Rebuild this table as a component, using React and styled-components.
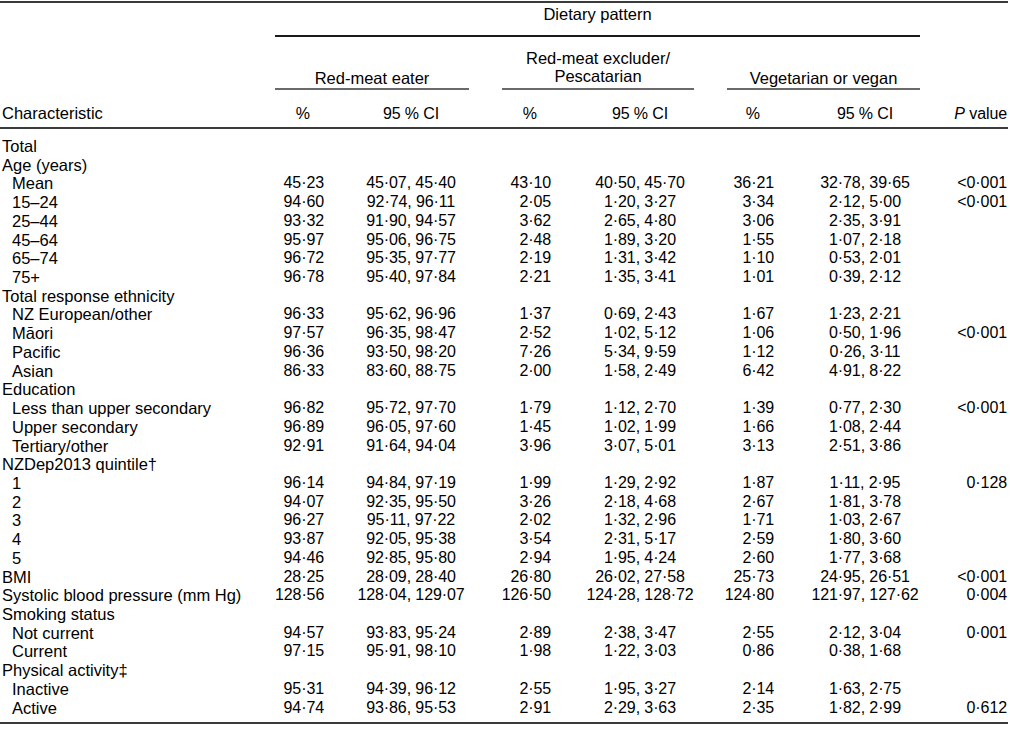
import React from 'react';
import styled, { createGlobalStyle } from 'styled-components';

const GlobalStyle = createGlobalStyle`
  body {
    margin: 0;
    background: #fff;
    font-family: "Liberation Sans", Arial, sans-serif;
    color: #000;
  }
`;

const rows = [
  { label: 'Total' },
  { label: 'Age (years)' },
  { label: 'Mean', sub: true, v: ['45·23', '45·07, 45·40', '43·10', '40·50, 45·70', '36·21', '32·78, 39·65', '<0·001'] },
  { label: '15–24', sub: true, v: ['94·60', '92·74, 96·11', '2·05', '1·20, 3·27', '3·34', '2·12, 5·00', '<0·001'] },
  { label: '25–44', sub: true, v: ['93·32', '91·90, 94·57', '3·62', '2·65, 4·80', '3·06', '2·35, 3·91', ''] },
  { label: '45–64', sub: true, v: ['95·97', '95·06, 96·75', '2·48', '1·89, 3·20', '1·55', '1·07, 2·18', ''] },
  { label: '65–74', sub: true, v: ['96·72', '95·35, 97·77', '2·19', '1·31, 3·42', '1·10', '0·53, 2·01', ''] },
  { label: '75+', sub: true, v: ['96·78', '95·40, 97·84', '2·21', '1·35, 3·41', '1·01', '0·39, 2·12', ''] },
  { label: 'Total response ethnicity' },
  { label: 'NZ European/other', sub: true, v: ['96·33', '95·62, 96·96', '1·37', '0·69, 2·43', '1·67', '1·23, 2·21', ''] },
  { label: 'Māori', sub: true, v: ['97·57', '96·35, 98·47', '2·52', '1·02, 5·12', '1·06', '0·50, 1·96', '<0·001'] },
  { label: 'Pacific', sub: true, v: ['96·36', '93·50, 98·20', '7·26', '5·34, 9·59', '1·12', '0·26, 3·11', ''] },
  { label: 'Asian', sub: true, v: ['86·33', '83·60, 88·75', '2·00', '1·58, 2·49', '6·42', '4·91, 8·22', ''] },
  { label: 'Education' },
  { label: 'Less than upper secondary', sub: true, v: ['96·82', '95·72, 97·70', '1·79', '1·12, 2·70', '1·39', '0·77, 2·30', '<0·001'] },
  { label: 'Upper secondary', sub: true, v: ['96·89', '96·05, 97·60', '1·45', '1·02, 1·99', '1·66', '1·08, 2·44', ''] },
  { label: 'Tertiary/other', sub: true, v: ['92·91', '91·64, 94·04', '3·96', '3·07, 5·01', '3·13', '2·51, 3·86', ''] },
  { label: 'NZDep2013 quintile†' },
  { label: '1', sub: true, v: ['96·14', '94·84, 97·19', '1·99', '1·29, 2·92', '1·87', '1·11, 2·95', '0·128'] },
  { label: '2', sub: true, v: ['94·07', '92·35, 95·50', '3·26', '2·18, 4·68', '2·67', '1·81, 3·78', ''] },
  { label: '3', sub: true, v: ['96·27', '95·11, 97·22', '2·02', '1·32, 2·96', '1·71', '1·03, 2·67', ''] },
  { label: '4', sub: true, v: ['93·87', '92·05, 95·38', '3·54', '2·31, 5·17', '2·59', '1·80, 3·60', ''] },
  { label: '5', sub: true, v: ['94·46', '92·85, 95·80', '2·94', '1·95, 4·24', '2·60', '1·77, 3·68', ''] },
  { label: 'BMI', v: ['28·25', '28·09, 28·40', '26·80', '26·02, 27·58', '25·73', '24·95, 26·51', '<0·001'] },
  { label: 'Systolic blood pressure (mm Hg)', v: ['128·56', '128·04, 129·07', '126·50', '124·28, 128·72', '124·80', '121·97, 127·62', '0·004'] },
  { label: 'Smoking status' },
  { label: 'Not current', sub: true, v: ['94·57', '93·83, 95·24', '2·89', '2·38, 3·47', '2·55', '2·12, 3·04', '0·001'] },
  { label: 'Current', sub: true, v: ['97·15', '95·91, 98·10', '1·98', '1·22, 3·03', '0·86', '0·38, 1·68', ''] },
  { label: 'Physical activity‡' },
  { label: 'Inactive', sub: true, v: ['95·31', '94·39, 96·12', '2·55', '1·95, 3·27', '2·14', '1·63, 2·75', ''] },
  { label: 'Active', sub: true, v: ['94·74', '93·86, 95·53', '2·91', '2·29, 3·63', '2·35', '1·82, 2·99', '0·612'] },
];

const cols = '275px 60px 152px 75px 156px 67px 160px 1fr';

const Table = styled.div`
  width: 1008px;
  padding-top: 1px;
  font-size: 16.5px;
`;

const TopHead = styled.div`
  display: grid;
  grid-template-columns: 275px 645px 1fr;
  border-top: 2px solid #3a3a3a;
  height: 34px;
`;

const Spanner = styled.div`
  grid-column: 2;
  text-align: center;
  line-height: 19px;
  padding-top: 2px;
  border-bottom: 2px solid #1a1a1a;
`;

const GroupHead = styled.div`
  display: grid;
  grid-template-columns: 275px 194px 33px 192px 33px 193px 1fr;
  height: 53px;
`;

const Group = styled.div`
  grid-column: ${(p) => p.$col};
  align-self: end;
  text-align: center;
  line-height: 18px;
  padding-bottom: ${(p) => (p.$two ? 3 : 1)}px;
  border-bottom: 2px solid #6a6a6a;
`;

const ColHead = styled.div`
  display: grid;
  grid-template-columns: ${cols};
  padding-top: 14px;
  line-height: 19px;
  height: 39px;
  box-sizing: border-box;
  border-bottom: 2px solid #3a3a3a;
`;

const Body = styled.div`
  padding: 8px 0 5px;
  border-bottom: 2px solid #3a3a3a;
`;

const Row = styled.div`
  display: grid;
  grid-template-columns: ${cols};
  height: 18.73px;
  line-height: 18.73px;
  white-space: nowrap;
`;

const Label = styled.div`
  padding-left: ${(p) => (p.$sub ? 12 : 2)}px;
`;

const Pct = styled.div`
  text-align: right;
  padding-right: ${(p) => (p.$head ? 25 : 11)}px;
  font-size: 16px;
  letter-spacing: -0.1px;
`;

const CI = styled.div`
  text-align: center;
  font-size: 16px;
  letter-spacing: -0.1px;
`;

const PVal = styled.div`
  text-align: right;
  padding-right: 1px;
  font-size: 16px;
  letter-spacing: -0.1px;
`;

const App = () => {
  return (
    <Table>
      <GlobalStyle />
      <TopHead>
        <Spanner>Dietary pattern</Spanner>
      </TopHead>
      <GroupHead>
        <Group $col={2}>Red-meat eater</Group>
        <Group $col={4} $two>
          Red-meat excluder/
          <br />
          Pescatarian
        </Group>
        <Group $col={6}>Vegetarian or vegan</Group>
      </GroupHead>
      <ColHead>
        <Label>Characteristic</Label>
        <Pct $head>%</Pct>
        <CI>95 % CI</CI>
        <Pct $head>%</Pct>
        <CI>95 % CI</CI>
        <Pct $head>%</Pct>
        <CI>95 % CI</CI>
        <PVal>
          <i>P</i> value
        </PVal>
      </ColHead>
      <Body>
        {rows.map((r, i) => (
          <Row key={i}>
            <Label $sub={r.sub}>{r.label}</Label>
            {r.v && (
              <>
                <Pct>{r.v[0]}</Pct>
                <CI>{r.v[1]}</CI>
                <Pct>{r.v[2]}</Pct>
                <CI>{r.v[3]}</CI>
                <Pct>{r.v[4]}</Pct>
                <CI>{r.v[5]}</CI>
                <PVal>{r.v[6]}</PVal>
              </>
            )}
          </Row>
        ))}
      </Body>
    </Table>
  );
};

export default App;
